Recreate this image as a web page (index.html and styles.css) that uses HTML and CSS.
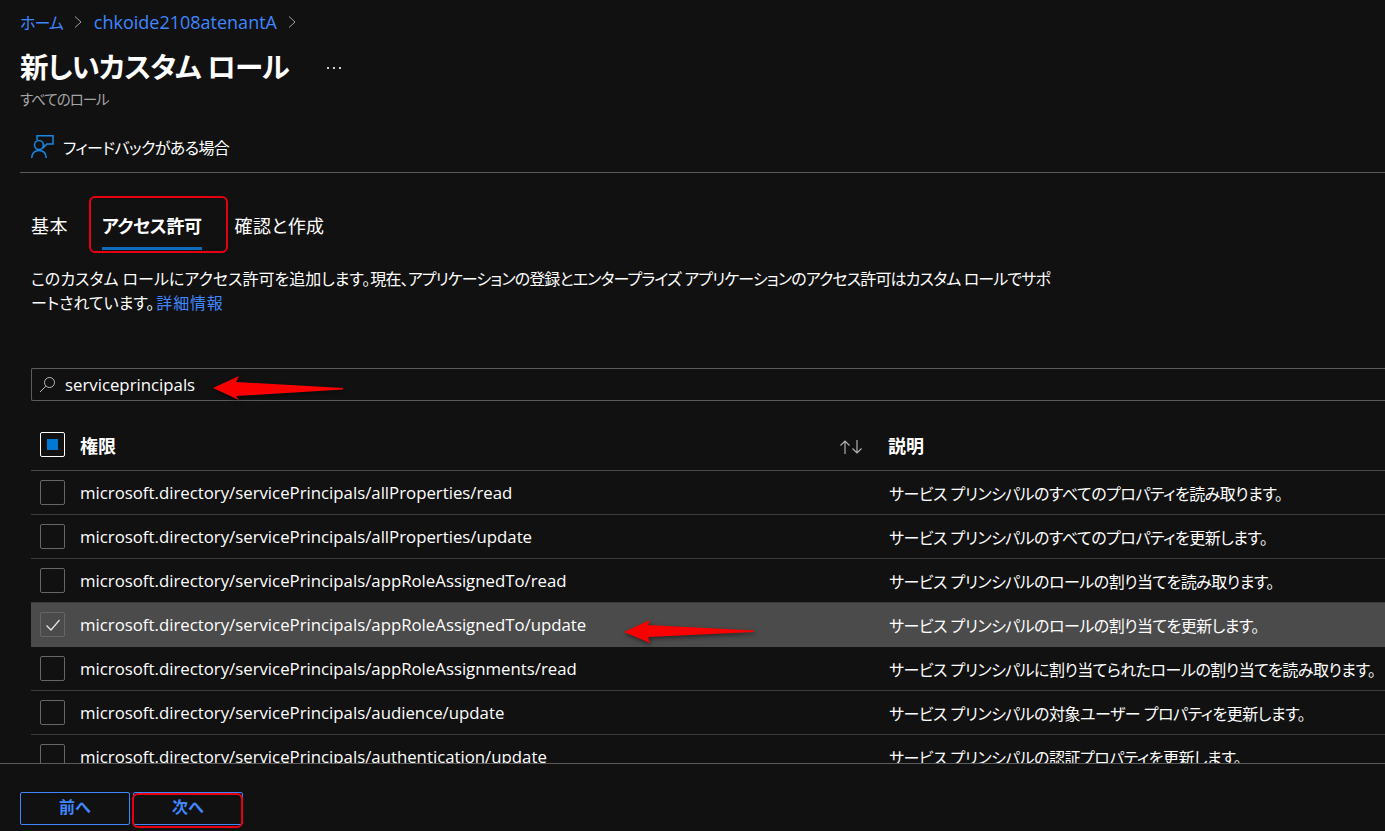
FILE: index.html
```html
<!DOCTYPE html>
<html lang="ja">
<head>
<meta charset="utf-8">
<title>新しいカスタム ロール</title>
<link rel="stylesheet" href="styles.css">
</head>
<body>
<div class="page">
  <main class="main">
    <nav class="crumbs">
      <a class="link home">ホーム</a>
      <svg class="chev" viewBox="0 0 10 14"><path d="M2 1.500 8 7 2 12.500"/></svg>
      <a class="link">chkoide2108atenantA</a>
      <svg class="chev" viewBox="0 0 10 14"><path d="M2 1.500 8 7 2 12.500"/></svg>
    </nav>
    <div class="title-row">
      <h1 class="title">新しいカスタム ロール</h1>
      <span class="more"><i></i><i></i><i></i></span>
    </div>
    <div class="subtitle">すべてのロール</div>
    <div class="command">
      <svg class="fb-icon" viewBox="0 0 24 24"><path d="M6 5V.7h16V9h-6l-3.500 3.500V9H13"/><circle cx="8" cy="10" r="4.500"/><path d="M.7 23C1 18 4 15.500 8 15.500s7 2.500 7.300 7.500"/></svg>
      <span>フィードバックがある場合</span>
    </div>
    <div class="tabs">
      <span class="tab">基本</span>
      <span class="tab tab-active">アクセス許可</span>
      <span class="tab">確認と作成</span>
      <span class="tab-mark"></span>
    </div>
    <p class="intro">このカスタム ロールにアクセス許可を追加します。<span class="intro-tight">現在、アプリケーションの登録とエンタープライズ アプリケーションのアクセス許可はカスタム ロールでサポ</span><br>ートされています。<a class="link more-info">詳細情報</a></p>
    <div class="search">
      <svg class="search-icon" viewBox="0 0 16 16"><circle cx="10.500" cy="5.500" r="5"/><path d="M6.800 9.200 1 15"/></svg>
      <span>serviceprincipals</span>
    </div>
    <div class="table">
      <div class="row head">
        <span class="box box-partial"><i></i></span>
        <span class="name">権限</span>
        <svg class="sort" viewBox="0 0 24 16"><path d="M6 15V2M1.500 6.500 6 2l4.500 4.500M18 1v13M13.500 9.500 18 14l4.500-4.500"/></svg>
        <span class="desc">説明</span>
      </div>
      <div class="row"><span class="box"></span><span class="name">microsoft.directory/servicePrincipals/allProperties/read</span><span class="desc">サービス プリンシパルのすべてのプロパティを読み取ります。</span></div>
      <div class="row"><span class="box"></span><span class="name">microsoft.directory/servicePrincipals/allProperties/update</span><span class="desc">サービス プリンシパルのすべてのプロパティを更新します。</span></div>
      <div class="row"><span class="box"></span><span class="name">microsoft.directory/servicePrincipals/appRoleAssignedTo/read</span><span class="desc">サービス プリンシパルのロールの割り当てを読み取ります。</span></div>
      <div class="row row-selected"><span class="box"><svg class="check" viewBox="0 0 16 16"><path d="M1.500 8.500 6 13l8.500-10"/></svg></span><span class="name">microsoft.directory/servicePrincipals/appRoleAssignedTo/update</span><span class="desc">サービス プリンシパルのロールの割り当てを更新します。</span></div>
      <div class="row"><span class="box"></span><span class="name">microsoft.directory/servicePrincipals/appRoleAssignments/read</span><span class="desc">サービス プリンシパルに割り当てられたロールの割り当てを読み取ります。</span></div>
      <div class="row"><span class="box"></span><span class="name">microsoft.directory/servicePrincipals/audience/update</span><span class="desc">サービス プリンシパルの対象ユーザー プロパティを更新します。</span></div>
      <div class="row"><span class="box"></span><span class="name">microsoft.directory/servicePrincipals/authentication/update</span><span class="desc">サービス プリンシパルの認証プロパティを更新します。</span></div>
    </div>
  </main>
  <footer class="footer">
    <button class="btn">前へ</button>
    <button class="btn">次へ</button>
  </footer>
</div>
<div class="callout callout-tab"></div>
<div class="callout callout-next"></div>
<svg class="arrow arrow-search" viewBox="0 0 130 24"><path d="M0 12 26 0l-3 6 107 6v1.500L23 20l3 4z"/></svg>
<svg class="arrow arrow-row" viewBox="0 0 130 24"><path d="M0 12 26 0l-2 5 106 5.500v1.500L24 17l2 6z"/></svg>
</body>
</html>
```

FILE: styles.css
```css
* { box-sizing: border-box; }
html, body { margin: 0; height: 100%; overflow: hidden; }
body {
  background: #111111;
  color: #fff;
  font-family: "Open Sans", "Noto Sans CJK JP", sans-serif;
  font-feature-settings: "palt";
  font-size: 16.800px;
  position: relative;
}
.page { height: 831px; display: flex; flex-direction: column; }
.main { flex: 1; min-height: 0; overflow: hidden; padding-left: 20px; }
.link { color: #3f86ff; }
.crumbs { display: flex; align-items: center; gap: 10.500px; height: 22px; margin-top: 11px; font-size: 18px; }
.home { font-size: 16px; letter-spacing: -1px; }
.chev { width: 10px; height: 14px; fill: none; stroke: #a0a0a0; stroke-width: 1; }
.title-row { display: flex; align-items: center; height: 42px; margin-top: 13px; }
.title { margin: 0; font-size: 28.500px; line-height: 42px; font-weight: 700; letter-spacing: -0.9px; }
.more { margin-left: 38px; display: flex; gap: 4px; margin-top: 2px; }
.more i { display: block; width: 2px; height: 2px; background: #d0d0d0; }
.subtitle { font-size: 14.500px; line-height: 20px; height: 20px; margin-top: 2px; color: #a6a6a6; letter-spacing: -1px; }
.command { display: flex; align-items: center; gap: 8px; height: 49px; margin-top: 14px; padding-left: 11px; border-bottom: 1px solid #5c5c5c; font-size: 16px; letter-spacing: -0.6px; padding-bottom: 2px; }
.fb-icon { width: 24px; height: 24px; fill: none; stroke: #1a86e0; stroke-width: 1.500; }
.tabs { display: flex; height: 94px; padding: 10px 0 0 11px; position: relative; align-items: center; font-size: 18px; }
.tab { padding: 0 33px 0 0; letter-spacing: 0.4px; }
.tab-active { font-weight: 700; letter-spacing: -0.4px; padding-left: 1px; }
.tab-mark { position: absolute; left: 82px; top: 74px; width: 100px; height: 3px; background: #0f6cbd; }
.intro { margin: 0 0 0 11px; font-size: 16px; line-height: 24px; height: 48px; white-space: nowrap; }
.intro-tight { letter-spacing: -0.88px; }
.more-info { margin-left: 2px; letter-spacing: 0.8px; }
.search { display: flex; align-items: center; gap: 10px; height: 33px; margin: 53px 0 0 11px; padding-left: 7px; border: 1px solid #5c5c5c; border-right: 0; border-radius: 2px 0 0 2px; }
.search-icon { width: 16px; height: 16px; fill: none; stroke: #b8b8b8; stroke-width: 1; }
.table { margin: 24px 0 0 11px; }
.row { display: flex; align-items: center; height: 44px; border-bottom: 1px solid #3c3c3c; padding-left: 9px; position: relative; white-space: nowrap; }
.head { height: 46px; font-weight: 700; font-size: 18px; border-bottom-color: #4a4a4a; padding-bottom: 6px; }
.row-selected { background: #4b4b4b; border-bottom-color: #4b4b4b; }
.box { width: 25px; height: 25px; flex: none; border: 1px solid #666; border-radius: 2px; display: flex; align-items: center; justify-content: center; }
.box-partial { border-color: #fff; }
.box-partial i { display: block; width: 11px; height: 11px; background: #0078d4; }
.check { width: 16px; height: 16px; fill: none; stroke: #e8e8e8; stroke-width: 1.200; }
.name { margin-left: 15px; width: 809px; flex: none; }
.head .name { width: 759px; }
.sort { width: 24px; height: 16px; flex: none; fill: none; stroke: #b0b0b0; stroke-width: 1.200; margin: 4px 25px 0 0; }
.desc { font-size: 16px; letter-spacing: -0.5px; }
.head .desc { font-size: 18px; letter-spacing: 0; }
.footer { height: 68px; flex: none; border-top: 1px solid #5c5c5c; padding: 28px 0 0 20px; display: flex; gap: 3px; align-items: flex-start; }
.btn { width: 110px; height: 33px; background: transparent; border: 1px solid #3f86ff; border-radius: 2px; color: #3f86ff; font: 700 16px "Open Sans", "Noto Sans CJK JP", sans-serif; padding: 0 0 5px; }
.callout { position: absolute; border: 2px solid #e60012; border-radius: 6px; }
.callout-tab { left: 89px; top: 196px; width: 139px; height: 57px; }
.callout-next { left: 132px; top: 793px; width: 111px; height: 35px; }
.arrow { position: absolute; fill: #fb0000; filter: drop-shadow(1px 2px 2px rgba(0,0,0,.5)); width: 130px; height: 24px; }
.arrow-search { left: 213px; top: 376px; }
.arrow-row { left: 624px; top: 620px; }
```
